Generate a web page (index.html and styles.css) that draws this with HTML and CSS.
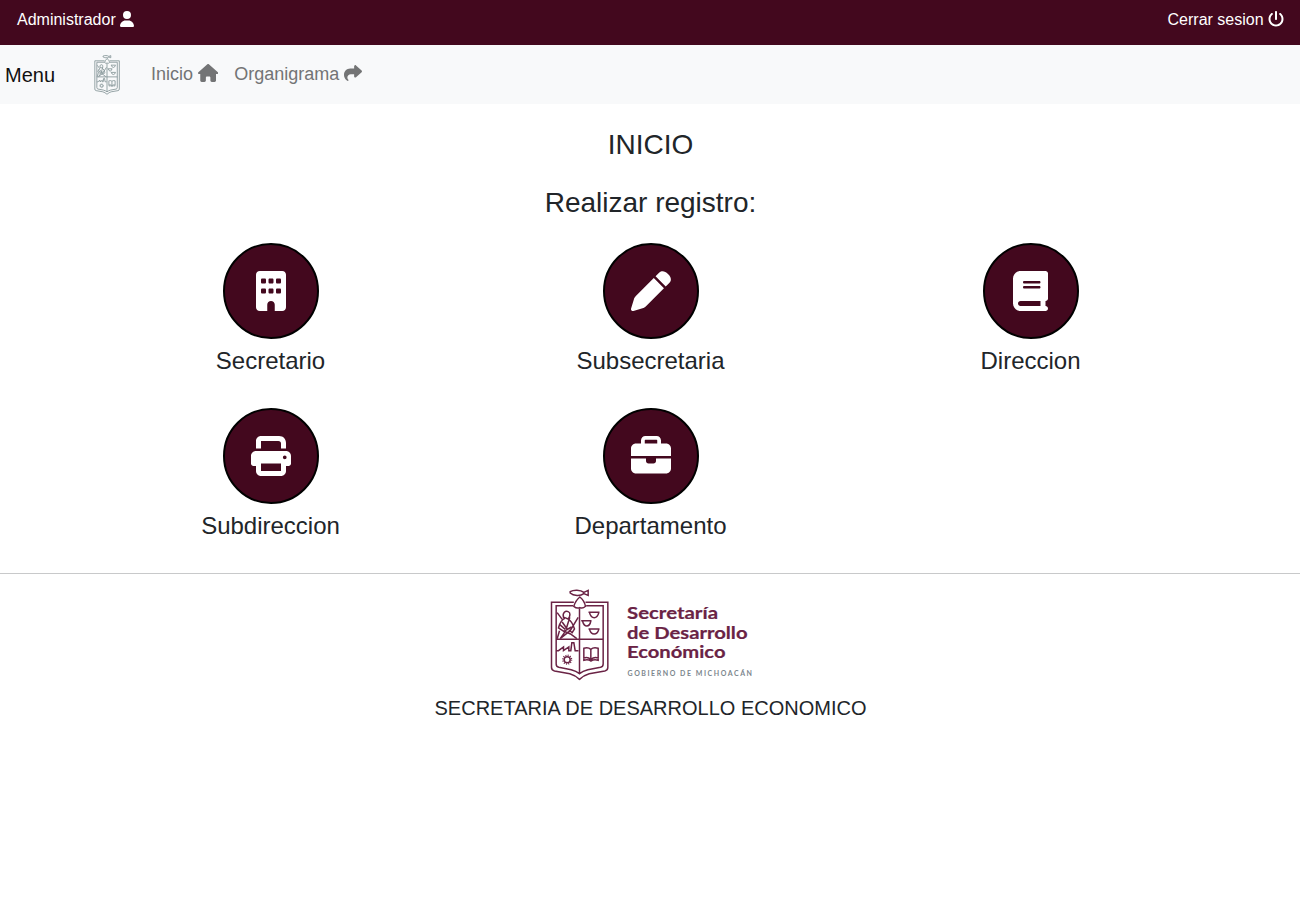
FILE: index.html
```
<!DOCTYPE html>
<html lang="es">
<head>
<meta charset="utf-8">
<title>Inicio</title>
<link rel="stylesheet" href="styles.css">
</head>
<body>
<svg width="0" height="0" class="defs" aria-hidden="true">
  <symbol id="crest" viewBox="30 27 180 276">
    <path d="M92 35C102 29 123 29 133 37L146 31V46L133 41C123 49 102 48 92 39Z"/>
    <path d="M121 51C112 58 106 69 103 79Q112 87 121 83Q130 87 138 79C136 69 130 58 121 51Z"/>
    <path d="M103 67H36V262Q36 271 45 273L91 281Q106 285 120 298Q134 285 149 281L196 273Q205 271 205 262V67H138"/>
    <path d="M101 77H50V252Q50 260 58 262L95 269Q110 273 120 281Q130 273 145 269L183 262Q191 260 191 252V77H140M120 85V281M50 178H191"/>
    <path d="M72 112C68 98 78 91 86 95C94 98 92 109 86 117L76 113ZM76 115C62 121 60 134 57 144L73 154L96 141M61 134L77 148M87 118C98 124 102 137 105 147L98 158L88 150M53 176L60 152M62 176L77 155L93 162L112 176M68 126L85 150M91 112L80 147M116 112L92 152L62 176M53 98L68 118"/>
    <path d="M147 97H180M150 98Q154 113 164 113Q174 113 178 98M125 122H156M129 123Q133 138 142 138Q151 138 154 123M147 147H180M150 148Q154 162 164 162Q174 162 178 148"/>
    <path d="M50 212H57L72 201V212L88 201V212H94L97 188H103L107 212H117"/>
    <circle cx="83" cy="239" r="9"/>
    <circle cx="83" cy="239" r="13" stroke-dasharray="3 3.8"/>
    <path d="M154 208C147 202 139 203 133 205V234Q145 230 154 238Q164 230 176 234V205Q162 201 154 208ZM154 208V238M133 237V241Q145 237 154 243Q164 237 176 241V237"/>
  </symbol>
</svg>

<header class="topbar">
  <span>Administrador <svg class="icon user" viewBox="0 0 448 512"><path d="M224 256A128 128 0 1 0 224 0a128 128 0 1 0 0 256zm-45.7 48C79.8 304 0 383.8 0 482.3C0 498.7 13.3 512 29.7 512H418.3c16.4 0 29.7-13.3 29.7-29.7C448 383.8 368.2 304 269.7 304H178.3z"/></svg></span>
  <span>Cerrar sesion <svg class="icon power" viewBox="0 0 512 512"><path d="M288 32c0-17.7-14.3-32-32-32s-32 14.3-32 32V256c0 17.7 14.3 32 32 32s32-14.3 32-32V32zM143.5 120.6c13.6-11.3 15.4-31.5 4.1-45.1s-31.5-15.4-45.1-4.1C49.7 115.4 16 181.8 16 256c0 132.5 107.5 240 240 240s240-107.5 240-240c0-74.2-33.8-140.6-86.6-184.6c-13.6-11.3-33.8-9.4-45.1 4.1s-9.4 33.8 4.1 45.1c38.9 32.3 63.5 81 63.5 135.4c0 97.2-78.8 176-176 176s-176-78.8-176-176c0-54.4 24.7-103.1 63.5-135.4z"/></svg></span>
</header>

<nav class="navbar">
  <span class="brand">Menu</span>
  <svg class="nav-crest"><use href="#crest"/></svg>
  <a class="link">Inicio <svg class="icon house" viewBox="0 0 576 512"><path d="M575.8 255.5c0 18-15 32.1-32 32.1h-32l.7 160.2c0 2.7-.2 5.4-.5 8.1V472c0 22.1-17.9 40-40 40H456c-1.1 0-2.2 0-3.3-.1c-1.4 .1-2.8 .1-4.2 .1H416 392c-22.1 0-40-17.9-40-40V448 384c0-17.7-14.3-32-32-32H256c-17.7 0-32 14.3-32 32v64 24c0 22.1-17.9 40-40 40H160 128.1c-1.5 0-3-.1-4.5-.2c-1.2 .1-2.4 .2-3.6 .2H104c-22.1 0-40-17.9-40-40V360c0-.9 0-1.9 .1-2.8V287.6H32c-18 0-32-14-32-32.1c0-9 3-17 10-24L266.4 8c7-7 15-8 22-8s15 2 21 7L564.8 231.5c8 7 12 15 11 24z"/></svg></a>
  <a class="link">Organigrama <svg class="icon share" viewBox="0 0 512 512"><path d="M307 34.8c-11.5 5.1-19 16.6-19 29.2v64H176C78.8 128 0 206.8 0 304C0 417.3 81.5 467.9 100.2 478.1c2.5 1.4 5.3 1.9 8.1 1.9c10.9 0 19.7-8.9 19.7-19.7c0-7.5-4.3-14.4-9.8-19.5C108.8 431.9 96 414.4 96 384c0-53 43-96 96-96h96v64c0 12.6 7.4 24.1 19 29.2s25 3 34.4-5.4l160-144c6.7-6.1 10.6-14.7 10.6-23.8s-3.8-17.7-10.6-23.8l-160-144c-9.4-8.5-22.9-10.6-34.4-5.4z"/></svg></a>
</nav>

<main>
  <h1 class="title">INICIO</h1>
  <h2 class="title subtitle">Realizar registro:</h2>
  <div class="grid">
    <div class="item"><span class="circle"><svg class="glyph" viewBox="0 0 384 512"><path fill-rule="evenodd" d="M48 0C21.5 0 0 21.5 0 48V464c0 26.5 21.5 48 48 48h96V432c0-26.5 21.5-48 48-48s48 21.5 48 48v80h96c26.5 0 48-21.5 48-48V48c0-26.5-21.5-48-48-48H48zM64 240c0-8.8 7.2-16 16-16h32c8.8 0 16 7.2 16 16v32c0 8.8-7.2 16-16 16H80c-8.8 0-16-7.2-16-16V240zm112-16h32c8.8 0 16 7.2 16 16v32c0 8.8-7.2 16-16 16H176c-8.8 0-16-7.2-16-16V240c0-8.8 7.2-16 16-16zm80 16c0-8.8 7.2-16 16-16h32c8.8 0 16 7.2 16 16v32c0 8.8-7.2 16-16 16H272c-8.8 0-16-7.2-16-16V240zM80 96h32c8.8 0 16 7.2 16 16v32c0 8.8-7.2 16-16 16H80c-8.8 0-16-7.2-16-16V112c0-8.8 7.2-16 16-16zm80 16c0-8.8 7.2-16 16-16h32c8.8 0 16 7.2 16 16v32c0 8.8-7.2 16-16 16H176c-8.8 0-16-7.2-16-16V112zM272 96h32c8.8 0 16 7.2 16 16v32c0 8.8-7.2 16-16 16H272c-8.8 0-16-7.2-16-16V112c0-8.8 7.2-16 16-16z"/></svg></span><h3 class="label">Secretario</h3></div>
    <div class="item"><span class="circle"><svg class="glyph" viewBox="0 0 512 512"><path d="M362.7 19.3L314.3 67.7 444.3 197.7l48.4-48.4C520 122 517 77 473 39C435 -5 390 -8 362.7 19.3zM291.7 90.3L62 320C46 336 41 347 36.400 364L1 481.2C-1.5 489.7 .8 498.8 7 505s15.3 8.5 23.7 6.1l117-35.400C166 471 176 466 192 450L421.7 220.3 291.7 90.3z"/></svg></span><h3 class="label">Subsecretaria</h3></div>
    <div class="item"><span class="circle"><svg class="glyph" viewBox="0 0 448 512"><path d="M96 0C43 0 0 43 0 96V416c0 53 43 96 96 96H384h32c17.7 0 32-14.3 32-32s-14.3-32-32-32V384c17.7 0 32-14.3 32-32V32c0-17.7-14.3-32-32-32H384 96zm0 384H352v64H96c-17.7 0-32-14.3-32-32s14.3-32 32-32zm32-240c0-8.8 7.2-16 16-16H336c8.8 0 16 7.2 16 16s-7.2 16-16 16H144c-8.8 0-16-7.2-16-16zm16 48H336c8.8 0 16 7.2 16 16s-7.2 16-16 16H144c-8.8 0-16-7.2-16-16s7.2-16 16-16z" fill-rule="evenodd"/></svg></span><h3 class="label">Direccion</h3></div>
    <div class="item"><span class="circle"><svg class="glyph" viewBox="0 0 512 512"><path fill-rule="evenodd" d="M128 0C92.7 0 64 28.7 64 64v96h64V64H350Q384 64 384 98V160h64V90C448 36 412 0 360 0H128zM384 352v96H128V352H384zm64 32h32c17.7 0 32-14.3 32-32V256c0-35.3-28.7-64-64-64H64c-35.3 0-64 28.7-64 64v96c0 17.7 14.3 32 32 32H64v64c0 35.3 28.7 64 64 64H384c35.3 0 64-28.7 64-64V384zM432 248a24 24 0 1 1 0 48 24 24 0 1 1 0-48z"/></svg></span><h3 class="label">Subdireccion</h3></div>
    <div class="item"><span class="circle"><svg class="glyph" viewBox="0 0 512 512"><path fill-rule="evenodd" d="M184 48H328c4.4 0 8 3.6 8 8V96H176V56c0-4.4 3.6-8 8-8zm-56 8V96H64C28.7 96 0 124.7 0 160v96H512V160c0-35.3-28.7-64-64-64H384V56c0-30.9-25.1-56-56-56H184c-30.9 0-56 25.1-56 56zM512 288H320v32c0 17.7-14.3 32-32 32H224c-17.7 0-32-14.3-32-32V288H0V416c0 35.3 28.7 64 64 64H448c35.3 0 64-28.7 64-64V288z"/></svg></span><h3 class="label">Departamento</h3></div>
  </div>
</main>

<footer class="footer">
  <svg class="logo" width="204" height="92" viewBox="0 0 204 92">
    <use href="#crest" class="logo-crest" x="-0.5" width="60" height="92"/>
    <g class="logo-name">
      <text x="77" y="30" textLength="91" lengthAdjust="spacingAndGlyphs">Secretaría</text>
      <text x="77" y="49.5" textLength="120.5" lengthAdjust="spacingAndGlyphs">de Desarrollo</text>
      <text x="77" y="69" textLength="98.5" lengthAdjust="spacingAndGlyphs">Económico</text>
    </g>
    <text class="logo-sub" x="77.5" y="87" textLength="124.5">GOBIERNO DE MICHOACÁN</text>
  </svg>
  <p class="footer-text">SECRETARIA DE DESARROLLO ECONOMICO</p>
</footer>
</body>
</html>
```
FILE: styles.css
```
* { box-sizing: border-box; }

body {
  margin: 0;
  background: #fff;
  color: #212529;
  font: 16px/1.5 "Liberation Sans", Arial, sans-serif;
}

.defs { display: block; }

.icon {
  height: 1em;
  fill: currentColor;
  vertical-align: -0.125em;
}

.topbar {
  display: flex;
  justify-content: space-between;
  height: 45px;
  padding: 8px 16px 0 17px;
  background: #43081e;
  color: #fff;
}

.navbar {
  display: flex;
  align-items: center;
  height: 59px;
  padding-left: 5px;
  background: #f8f9fa;
}

.brand {
  width: 88px;
  font-size: 20px;
  color: #111;
}

.nav-crest {
  width: 28px;
  height: 40px;
  margin-right: 30px;
  fill: none;
  stroke: #87979a;
  stroke-width: 6;
}

.link {
  margin-right: 16px;
  font-size: 18px;
  color: #737475;
}

.title {
  margin: 0;
  padding: 24px 0 0 1px;
  font-size: 28px;
  font-weight: 400;
  line-height: 34px;
  text-align: center;
}

.grid {
  display: grid;
  grid-template-columns: repeat(3, 380px);
  justify-content: center;
  row-gap: 32px;
  padding: 23px 0 32px 1px;
}

.item {
  display: flex;
  flex-direction: column;
  align-items: center;
  height: 133px;
}

.circle {
  display: flex;
  align-items: center;
  justify-content: center;
  width: 96px;
  height: 96px;
  border: 2px solid #000;
  border-radius: 50%;
  background: #43081e;
}

.glyph {
  height: 40px;
  fill: #fff;
}

.label {
  margin: 7px 0 0;
  font-size: 24px;
  font-weight: 400;
  line-height: 29px;
}

.footer {
  display: flex;
  flex-direction: column;
  align-items: center;
  padding-top: 15px;
  border-top: 1px solid #c8c9ca;
}

.logo { margin-left: 4px; }

.logo-crest {
  fill: none;
  stroke: #6a2345;
  stroke-width: 4.5;
}

.logo-name {
  fill: #6a2345;
  stroke: #6a2345;
  stroke-width: 0.2;
  font: 700 17.5px Lato, sans-serif;
}

.logo-sub {
  fill: #7c868d;
  font: 700 7px Lato, sans-serif;
}

.footer-text {
  margin: 12px 0 0;
  padding-left: 1px;
  font-size: 20px;
  line-height: 30px;
}
```
